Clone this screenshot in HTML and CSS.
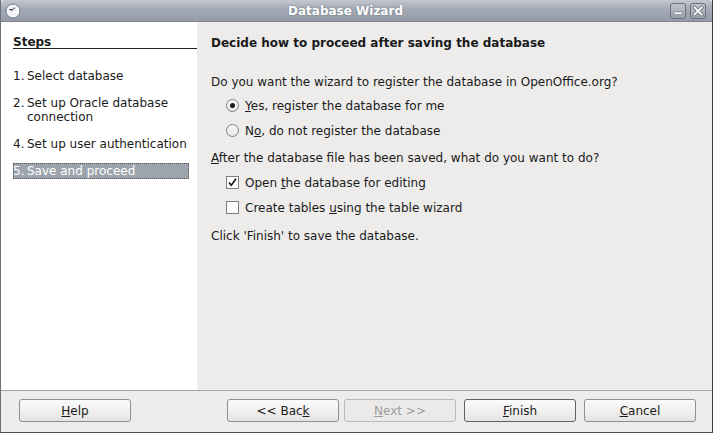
FILE: index.html
```html
<!DOCTYPE html>
<html>
<head>
<meta charset="utf-8">
<link rel="stylesheet" href="styles.css">
</head>
<body>
<div class="window">
  <div class="titlebar">
    <svg class="app-icon" width="16" height="16" viewBox="0 0 16 16">
      <circle cx="8" cy="8" r="7" fill="#f4f6fa" stroke="#6d7a92" stroke-width="1"/>
      <path d="M3.5 6.5 L7 6 L9 7 L6 7.5 Z" fill="#222"/>
      <path d="M8 5.5 L10.5 5" stroke="#444" stroke-width="0.8"/>
    </svg>
    <div class="title">Database Wizard</div>
    <div class="wm-buttons">
      <span class="wm-btn"><svg width="14" height="14" viewBox="0 0 14 14"><rect x="3" y="8" width="8" height="2.5" fill="#fff" stroke="#6b707a" stroke-width="0.6"/></svg></span>
      <span class="wm-btn"><svg width="14" height="14" viewBox="0 0 14 14"><path d="M3.5 3.5 L10.5 10.5 M10.5 3.5 L3.5 10.5" stroke="#6b707a" stroke-width="3.4" stroke-linecap="square"/><path d="M3.5 3.5 L10.5 10.5 M10.5 3.5 L3.5 10.5" stroke="#fff" stroke-width="1.8" stroke-linecap="square"/></svg></span>
    </div>
  </div>
  <div class="main">
    <div class="steps">
      <div class="steps-head">Steps</div>
      <ul class="step-list">
        <li class="step"><span class="num">1.</span><span>Select database</span></li>
        <li class="step"><span class="num">2.</span><span>Set up Oracle database connection</span></li>
        <li class="step"><span class="num">4.</span><span>Set up user authentication</span></li>
        <li class="step active"><span class="num">5.</span><span>Save and proceed</span></li>
      </ul>
    </div>
    <div class="content">
      <div class="heading">Decide how to proceed after saving the database</div>
      <div class="question q1">Do you want the wizard to register the database in OpenOffice.org?</div>
      <div class="group g1">
        <div class="option">
          <span class="radio checked"></span><span><u>Y</u>es, register the database for me</span>
        </div>
        <div class="option">
          <span class="radio"></span><span>N<u>o</u>, do not register the database</span>
        </div>
      </div>
      <div class="question q2"><u>A</u>fter the database file has been saved, what do you want to do?</div>
      <div class="group g2">
        <div class="option">
          <span class="check"><svg width="13" height="13" viewBox="0 0 13 13"><path d="M3 6.5 L5.3 9.3 L10 2.8" fill="none" stroke="#111" stroke-width="1.6"/></svg></span><span>Open <u>t</u>he database for editing</span>
        </div>
        <div class="option">
          <span class="check"></span><span>Create tables <u>u</u>sing the table wizard</span>
        </div>
      </div>
      <div class="note">Click 'Finish' to save the database.</div>
    </div>
  </div>
  <div class="footer">
    <button class="btn"><u>H</u>elp</button>
    <div class="spacer"></div>
    <div class="nav">
      <button class="btn">&lt;&lt; Bac<u>k</u></button>
      <button class="btn disabled"><u>N</u>ext &gt;&gt;</button>
      <button class="btn default"><u>F</u>inish</button>
      <button class="btn"><u>C</u>ancel</button>
    </div>
  </div>
</div>
</body>
</html>
```

FILE: styles.css
```css
html, body {
  margin: 0;
  padding: 0;
  background: #edeceb;
}
body {
  font-family: "DejaVu Sans", sans-serif;
  font-size: 12px;
  color: #1a1a1a;
}
.window {
  width: 713px;
  height: 433px;
  box-sizing: border-box;
  display: flex;
  flex-direction: column;
  border-left: 1px solid #6b6f78;
  border-right: 1px solid #3c3f45;
  border-bottom: 1px solid #4a4d53;
  background: #edeceb;
  overflow: hidden;
}
.titlebar {
  height: 22px;
  flex: none;
  display: flex;
  align-items: center;
  background: linear-gradient(#c3c7cf, #a3a9b4 45%, #959ca8);
  border-radius: 5px 5px 0 0;
  border-bottom: 1px solid #7e848e;
  box-sizing: border-box;
  margin-left: -1px;
  margin-right: -1px;
}
.app-icon {
  margin-left: 5px;
  margin-top: 1px;
}
.title {
  flex: 1;
  text-align: center;
  color: #ffffff;
  font-weight: bold;
  font-size: 12px;
  text-shadow: 0 0 2px #6a707a;
}
.wm-buttons {
  display: flex;
  gap: 4px;
  margin-right: 7px;
  margin-top: 1px;
}
.wm-btn {
  width: 14px;
  height: 14px;
  border: 1px solid #6b707a;
  border-radius: 3px;
  background: linear-gradient(#c0c4cc, #9aa0ab);
  display: flex;
}
.main {
  flex: 1;
  display: flex;
  min-height: 0;
}
.steps {
  width: 196px;
  flex: none;
  background: #ffffff;
  padding: 14px 0 0 12px;
  box-sizing: border-box;
}
.steps-head {
  font-weight: bold;
  font-size: 12px;
  border-bottom: 1px solid #222;
  line-height: 12px;
}
.step-list {
  list-style: none;
  margin: 19px 0 0 0;
  padding: 0;
}
.step {
  display: flex;
  line-height: 14px;
  margin-bottom: 11px;
  width: 176px;
  padding: 1px 0;
}
.step .num {
  width: 14px;
  flex: none;
}
.step.active {
  background: #9ea4ad;
  color: #ffffff;
  outline: 1px dotted #555;
  outline-offset: -1px;
}
.content {
  flex: 1;
  padding: 13px 0 0 14px;
}
.heading {
  font-weight: bold;
  font-size: 12px;
  line-height: 16px;
}
.question {
  line-height: 16px;
}
.q1 {
  margin-top: 23px;
}
.g1 {
  margin-top: 3px;
}
.q2 {
  margin-top: 7px;
}
.g2 {
  margin-top: 4px;
}
.option {
  display: flex;
  align-items: center;
  height: 25px;
  padding-left: 15px;
  gap: 6px;
}
.radio {
  width: 11px;
  height: 11px;
  border-radius: 50%;
  border: 1px solid #7f7f7f;
  background: linear-gradient(#f8f8f8, #e6e6e6);
  position: relative;
  flex: none;
}
.radio.checked::after {
  content: "";
  position: absolute;
  left: 3px;
  top: 3px;
  width: 5px;
  height: 5px;
  border-radius: 50%;
  background: #1a1a1a;
}
.check {
  width: 11px;
  height: 11px;
  border: 1px solid #7f7f7f;
  background: #fdfdfd;
  flex: none;
  display: flex;
  overflow: hidden;
}
.check svg {
  margin: -1px;
}
.note {
  margin-top: 8px;
  line-height: 16px;
}
.footer {
  flex: none;
  height: 42px;
  border-top: 1px solid #a6a6a6;
  display: flex;
  align-items: flex-start;
  padding: 8px 16px 0 18px;
  box-sizing: border-box;
}
.spacer {
  flex: 1;
}
.nav {
  display: flex;
  gap: 8px;
}
.nav .btn:first-child {
  margin-right: -3px;
}
.btn {
  width: 112px;
  height: 23px;
  border: 1px solid #8e8f90;
  border-radius: 3px;
  background: linear-gradient(#fbfbfb, #efeeed 60%, #e4e3e2);
  font-family: "DejaVu Sans", sans-serif;
  font-size: 12px;
  color: #1a1a1a;
  padding: 0;
}
.btn.disabled {
  color: #9c9c9c;
  border-color: #b9b9b9;
  background: #ebeae9;
}
.btn.default {
  border-color: #5e6168;
}
```
